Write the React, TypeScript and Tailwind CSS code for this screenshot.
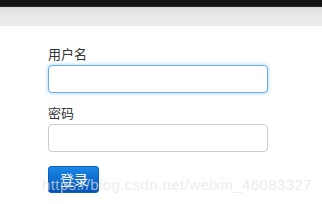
import React from "react";

export default function App() {
  return (
    <div
      className="relative w-[322px] h-[204px] overflow-hidden bg-white"
      style={{ fontFamily: '"Liberation Sans", Arial, "Noto Sans CJK SC", sans-serif' }}
    >
      <div className="h-[6px] bg-[#141414]" />
      <div className="h-[1px] bg-[#2a2a2a]" />
      <div className="h-[19px] bg-gradient-to-b from-[#dcdcdc] via-[#ebebeb] to-[#ececec]" />
      <div className="bg-white rounded-tl-[4px] pl-[48px] pt-[20px] flex flex-col">
        <label className="text-[13px] leading-[17px] text-[#333] mb-[2px]">用户名</label>
        <div className="w-[220px] h-[28px] rounded-[4px] border border-[#66afe9] shadow-[0_0_4px_rgba(102,175,233,0.6)] bg-white" />
        <label className="text-[13px] leading-[17px] text-[#333] mt-[12px] mb-[2px]">密码</label>
        <div className="w-[220px] h-[28px] rounded-[4px] border border-[#cccccc] bg-white" />
        <button className="mt-[14px] w-[51px] h-[27px] rounded-[3px] border border-[#0a5fbf] bg-gradient-to-b from-[#1b87e6] to-[#0553b5] text-white text-[14px] leading-[20px] text-left pl-[11px]">
          登录
        </button>
      </div>
      <div className="absolute left-[42px] top-[176px] text-[15px] leading-[17px] text-[rgba(228,228,228,0.7)] whitespace-nowrap tracking-[0.4px]">
        https://blog.csdn.net/weixin_46083327
      </div>
    </div>
  );
}
